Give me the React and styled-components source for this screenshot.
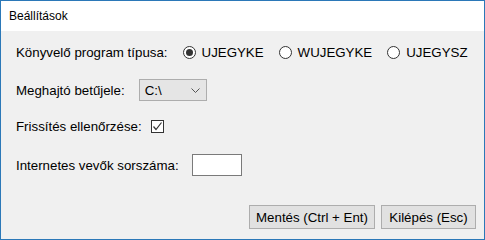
import React, { useState } from 'react';
import styled, { createGlobalStyle } from 'styled-components';

const GlobalStyle = createGlobalStyle`
  html, body {
    margin: 0;
    padding: 0;
    background: #ffffff;
  }
`;

const Window = styled.div`
  width: 485px;
  height: 240px;
  box-sizing: border-box;
  border: 1px solid #2b78b8;
  display: flex;
  flex-direction: column;
  font-family: "Liberation Sans", Arial, sans-serif;
  color: #000;
`;

const TitleBar = styled.div`
  height: 30px;
  flex: none;
  background: #ffffff;
  display: flex;
  align-items: center;
  padding-left: 8px;
  font-size: 12px;
`;

const Body = styled.div`
  flex: 1;
  background: #f0f0f0;
  display: flex;
  flex-direction: column;
  padding: 11px 8px 0 15px;
  font-size: 13.3px;
`;

const Row = styled.div`
  display: flex;
  align-items: center;
  height: ${p => p.$h || 20}px;
  margin-top: ${p => p.$mt || 0}px;
`;

const Label = styled.span`
  margin-right: ${p => p.$gap || 10}px;
  white-space: nowrap;
`;

const RadioOption = styled.label`
  display: flex;
  align-items: center;
  margin-right: 15px;
  cursor: default;
`;

const RadioCircle = styled.span`
  width: 11px;
  height: 11px;
  border: 1px solid #333;
  border-radius: 50%;
  background: #fff;
  display: flex;
  align-items: center;
  justify-content: center;
  margin-right: 6px;

  &::after {
    content: '';
    width: 7px;
    height: 7px;
    border-radius: 50%;
    background: #333;
    display: ${p => (p.$checked ? 'block' : 'none')};
  }
`;

const Select = styled.div`
  width: 68px;
  height: 22px;
  box-sizing: border-box;
  border: 1px solid #adadad;
  background: #e5e5e5;
  display: flex;
  align-items: center;
  justify-content: space-between;
  padding: 0 6px 0 5px;
`;

const CheckBox = styled.span`
  width: 13px;
  height: 13px;
  box-sizing: border-box;
  border: 1px solid #333;
  background: #fff;
  display: flex;
  align-items: center;
  justify-content: center;
`;

const TextInput = styled.input`
  width: 50px;
  height: 22px;
  box-sizing: border-box;
  border: 1px solid #7a7a7a;
  background: #fff;
  font: inherit;
  padding: 0 3px;
  outline: none;
`;

const Footer = styled.div`
  display: flex;
  justify-content: flex-end;
  gap: 6px;
  margin-top: 29px;
`;

const Button = styled.button`
  width: ${p => p.$w}px;
  height: 24px;
  border: 1px solid #adadad;
  background: #e1e1e1;
  font-family: "Liberation Sans", Arial, sans-serif;
  font-size: 13.3px;
  color: #000;
  padding: 0;
`;

const programs = ['UJEGYKE', 'WUJEGYKE', 'UJEGYSZ'];

export default function App() {
  const [program, setProgram] = useState('UJEGYKE');

  return (
    <>
      <GlobalStyle />
      <Window>
        <TitleBar>Beállítások</TitleBar>
        <Body>
          <Row>
            <Label $gap={15}>Könyvelő program típusa:</Label>
            {programs.map(p => (
              <RadioOption key={p} onClick={() => setProgram(p)}>
                <RadioCircle $checked={program === p} />
                {p}
              </RadioOption>
            ))}
          </Row>
          <Row $h={22} $mt={17}>
            <Label $gap={14}>Meghajtó betűjele:</Label>
            <Select>
              <span>C:\</span>
              <svg width="9" height="5" viewBox="0 0 9 5">
                <path d="M0.5 0.5 L4.5 4.5 L8.5 0.5" fill="none" stroke="#555" strokeWidth="1" />
              </svg>
            </Select>
          </Row>
          <Row $mt={15}>
            <Label $gap={9}>Frissítés ellenőrzése:</Label>
            <CheckBox>
              <svg width="11" height="11" viewBox="0 0 11 11">
                <path d="M1.5 5.5 L4 8.5 L9.5 1.5" fill="none" stroke="#333" strokeWidth="1.2" />
              </svg>
            </CheckBox>
          </Row>
          <Row $h={22} $mt={18}>
            <Label $gap={13}>Internetes vevők sorszáma:</Label>
            <TextInput defaultValue="" />
          </Row>
          <Footer>
            <Button $w={126}>Mentés (Ctrl + Ent)</Button>
            <Button $w={95}>Kilépés (Esc)</Button>
          </Footer>
        </Body>
      </Window>
    </>
  );
}
